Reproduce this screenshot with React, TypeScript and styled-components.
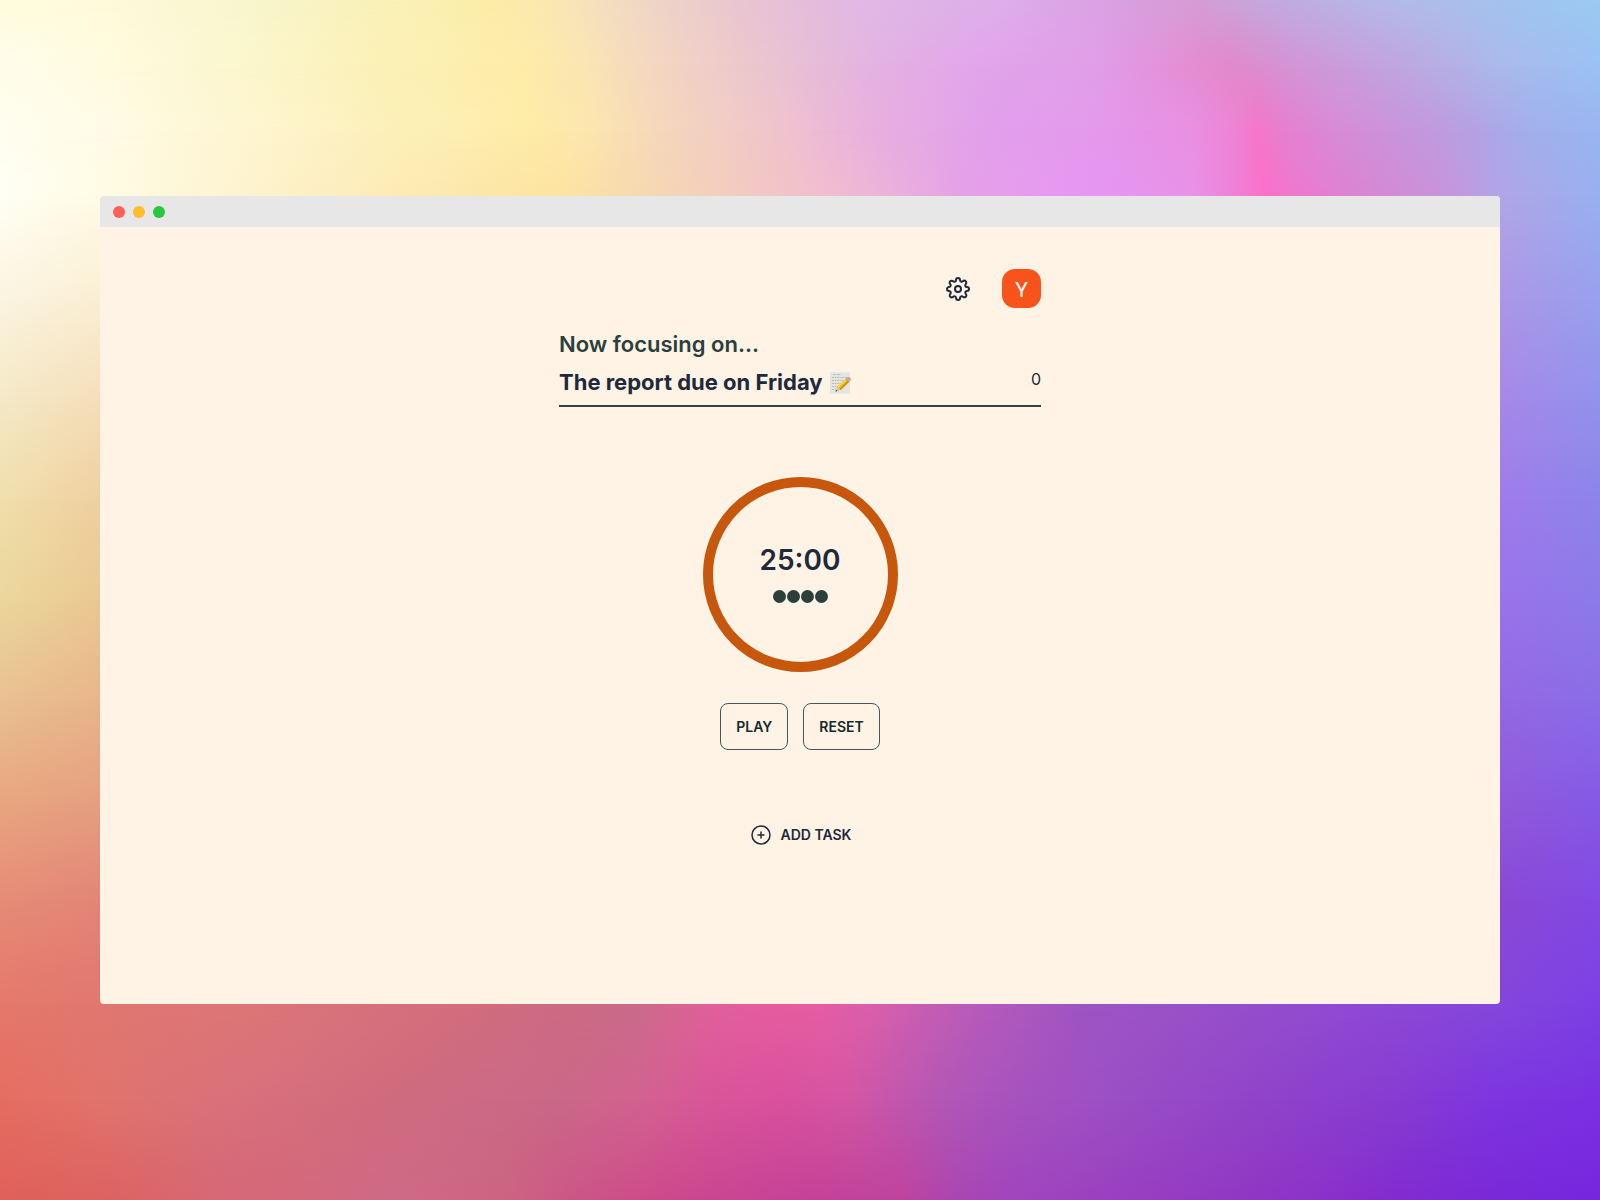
import React, { useEffect, useState } from "react";
import styled, { createGlobalStyle } from "styled-components";
import { FiSettings } from "react-icons/fi";

const GlobalStyle = createGlobalStyle`
  * { box-sizing: border-box; }
  body {
    margin: 0;
    font-family: Inter, "Liberation Sans", sans-serif;
    color: #1e293b;
  }
  h1, h2, p { margin: 0; }
  button { font: inherit; color: inherit; cursor: pointer; }
`;

/* The wallpaper is a colour mesh: every row is a horizontal gradient that
   fades in over the row above it. Stops are [colour, x], rows sit at y,
   both on a 1600 by 1200 grid that is stretched over the page. */
type Stop = [string, number];
type MeshRow = { y: number; stops: Stop[] };

const side = (y: number, a: string, b: string, c: string, d: string): MeshRow => ({
  y,
  stops: [[a, 0], [b, 100], [c, 1500], [d, 1600]],
});

const mesh: MeshRow[] = [
  { y: 0, stops: [["#fffbdc", 0], ["#fffadb", 100], ["#f9f6cf", 235], ["#faf1b6", 400], ["#fbeda8", 490], ["#fae9b1", 545], ["#f4dfbf", 600], ["#eed4c8", 660], ["#e8c4d2", 750], ["#e0b8e6", 870], ["#dfaeea", 1000], ["#d9a2e2", 1100], ["#d59cd5", 1200], ["#c4a8dd", 1260], ["#b3bbe9", 1400], ["#a0c5f0", 1530], ["#9bcaf3", 1600]] },
  { y: 65, stops: [["#fffdea", 0], ["#fffbe0", 100], ["#fbf6cc", 250], ["#fbf0b4", 400], ["#feeca9", 520], ["#fbe6b2", 580], ["#f5d9bf", 640], ["#ebc5cf", 760], ["#e4b3e0", 870], ["#e1a5eb", 980], ["#e19de8", 1100], ["#e48fd5", 1180], ["#e288cb", 1230], ["#d394d4", 1290], ["#bfa6e0", 1400], ["#aab9eb", 1500], ["#9ac2f3", 1600]] },
  { y: 130, stops: [["#fffef0", 0], ["#fffbe6", 100], ["#fef5d0", 250], ["#fcf0b8", 400], ["#feeca8", 530], ["#fce6ae", 590], ["#f5d8bb", 655], ["#f0c3cd", 780], ["#e8b0df", 870], ["#e29eec", 1000], ["#e399ec", 1100], ["#e98fe2", 1195], ["#ee82d2", 1238], ["#f576ca", 1257], ["#e67fce", 1285], ["#d98ad6", 1330], ["#bc9ce0", 1450], ["#a2afec", 1530], ["#99b5f1", 1600]] },
  { y: 195, stops: [["#fffff5", 0], ["#fffbe4", 100], ["#fdf2ce", 250], ["#fdeab4", 400], ["#fce3a0", 560], ["#f8dbae", 620], ["#f3cac0", 740], ["#f0bbd1", 840], ["#e5a1e8", 960], ["#e596f2", 1090], ["#e892e8", 1190], ["#ee80d8", 1235], ["#fd6fc8", 1264], ["#ee77ce", 1292], ["#d985d4", 1360], ["#c893da", 1440], ["#b1a5e7", 1500], ["#98b0f0", 1600]] },
  side(300, "#fbf4e0", "#faeed3", "#ac96e6", "#98a0ee"),
  side(400, "#f4e9c6", "#f5deb9", "#a688e8", "#9292ec"),
  side(500, "#f0dfac", "#efd0a0", "#9f7bea", "#8c84ea"),
  side(600, "#ead79b", "#ebc891", "#9973ea", "#8c7ae8"),
  side(700, "#e9c092", "#e8b58a", "#9468e4", "#8a6de8"),
  side(800, "#e8a680", "#e5a080", "#905ada", "#8559e6"),
  side(900, "#e68c76", "#e38577", "#8b48d4", "#8249e4"),
  { y: 1005, stops: [["#e5786a", 0], ["#e17770", 100], ["#dc7678", 250], ["#d5707c", 400], ["#cd6a81", 560], ["#ca6a8a", 635], ["#d7668f", 675], ["#e0609a", 710], ["#e55da0", 750], ["#e65da3", 820], ["#d75fac", 880], ["#bb5cb8", 960], ["#9f54c3", 1080], ["#964ecb", 1250], ["#8f49d3", 1350], ["#8446dc", 1500], ["#7c3fe4", 1600]] },
  { y: 1100, stops: [["#e56d60", 0], ["#e1736c", 100], ["#d9717a", 220], ["#cf6b7f", 400], ["#ca6888", 560], ["#d2628f", 640], ["#d9559a", 710], ["#da509c", 780], ["#d356a3", 850], ["#b357b5", 940], ["#a953bd", 1000], ["#9c50c4", 1100], ["#9144c9", 1250], ["#873bd2", 1400], ["#7c35e0", 1500], ["#7a30e2", 1600]] },
  { y: 1200, stops: [["#e0605a", 0], ["#dc625f", 100], ["#d76773", 200], ["#cf6a85", 380], ["#cb6582", 500], ["#cc5586", 580], ["#cc4a8b", 660], ["#c44298", 800], ["#bf439c", 900], ["#a946b3", 960], ["#a045bd", 1020], ["#933ac2", 1200], ["#8d33c6", 1300], ["#812bd0", 1400], ["#7a28d8", 1500], ["#7627de", 1600]] },
];

const Page = styled.div`
  position: relative;
  isolation: isolate;
  min-height: 100vh;
  display: grid;
  align-items: center;
  padding: 24px 100px;
`;

const MeshLayer = styled.div<{ $stops: Stop[]; $from: number; $to: number }>`
  position: absolute;
  inset: 0;
  z-index: -1;
  background: linear-gradient(
    to right,
    ${({ $stops }) => $stops.map(([c, x]) => `${c} ${x / 16}%`).join(", ")}
  );
  mask-image: ${({ $from, $to }) =>
    $to === 0
      ? "none"
      : `linear-gradient(to bottom, transparent ${$from / 12}%, #000 ${$to / 12}%)`};
`;

const Window = styled.div`
  border-radius: 4px;
  overflow: hidden;
  background: #fff3e5;
`;

const TitleBar = styled.div`
  display: flex;
  align-items: center;
  gap: 8px;
  height: 31px;
  padding: 0 13px;
  background: #e7e7e7;
`;

const Light = styled.span<{ $color: string }>`
  width: 12px;
  height: 12px;
  border-radius: 50%;
  background: ${({ $color }) => $color};
`;

const Main = styled.main`
  display: flex;
  flex-direction: column;
  align-items: center;
  width: 100%;
  max-width: 482px;
  margin: 0 auto;
  padding: 42px 0 157px;
`;

const Toolbar = styled.header`
  align-self: stretch;
  display: flex;
  justify-content: flex-end;
  align-items: center;
  gap: 32px;
`;

const IconButton = styled.button`
  display: grid;
  padding: 0;
  border: 0;
  background: none;
`;

const Avatar = styled.button`
  width: 39px;
  height: 39px;
  padding: 2px 0 0;
  border: 0;
  border-radius: 13px;
  background: #f9531c;
  && {
    color: #fff;
    font-family: Roboto, sans-serif;
    font-size: 21px;
    line-height: 36px;
  }
`;

const Focus = styled.section`
  align-self: stretch;
  display: grid;
  gap: 6px;
  margin-top: 20px;
`;

const FocusLabel = styled.h2`
  font-size: 22px;
  font-weight: 600;
  line-height: 32px;
  color: #2b3f3d;
`;

const TaskRow = styled.div`
  display: flex;
  justify-content: space-between;
  padding-bottom: 7px;
  border-bottom: 2px solid #2f4543;
`;

const TaskName = styled.h1`
  display: flex;
  align-items: center;
  gap: 6px;
  font-size: 22px;
  font-weight: 700;
  line-height: 32px;
`;

const TaskCount = styled.p`
  font-size: 16px;
  line-height: 26px;
`;

const Ring = styled.section`
  display: flex;
  flex-direction: column;
  align-items: center;
  justify-content: center;
  gap: 12px;
  width: 195px;
  height: 195px;
  margin-top: 70px;
  padding-bottom: 4px;
  border: 10px solid #c7570c;
  border-radius: 50%;
`;

const Time = styled.p`
  font-size: 28px;
  font-weight: 600;
  line-height: 36px;
`;

const Rounds = styled.div`
  display: flex;
  gap: 1px;
`;

const Round = styled.span`
  width: 13px;
  height: 13px;
  border-radius: 50%;
  background: #2b3f3d;
`;

const Controls = styled.div`
  display: flex;
  gap: 15px;
  margin-top: 31px;
`;

const ControlButton = styled.button`
  height: 47px;
  padding: 0 15px;
  border: 1px solid #4b5361;
  border-radius: 8px;
  background: none;
  && {
    font-size: 14px;
    font-weight: 600;
    color: #152a2c;
  }
`;

const AddButton = styled.button`
  display: flex;
  align-items: center;
  gap: 8px;
  margin-top: 73px;
  padding: 0;
  border: 0;
  background: none;
  && {
    font-size: 14px;
    font-weight: 600;
    line-height: 24px;
  }
`;

const PlusCircleIcon = () => (
  <svg width="24" height="24" viewBox="0 0 24 24" fill="none" stroke="#1e293b" strokeWidth="1.5" strokeLinecap="round" strokeLinejoin="round" aria-hidden="true">
    <path d="M12 9v6m3-3H9m12 0a9 9 0 11-18 0 9 9 0 0118 0z" />
  </svg>
);

const MemoIcon = () => (
  <svg width="24" height="24" viewBox="0 0 24 24" role="img" aria-label="Memo">
    <rect x="1" y="1" width="20" height="22.500" rx="0.500" fill="#e4e4e2" />
    <rect x="1" y="1" width="20" height="1.500" fill="#f1f1ef" />
    <g stroke="#b2b2b2" strokeWidth="0.800" fill="none" strokeDasharray="2.200 0.700 1.300 0.500">
      <path d="M4 4.500h8M3 7.500h15M3 10.500h13M3 13.500h9M3 16.500h7M3 19.500h4" />
    </g>
    <path d="M6.500 21.800l1.700-5 3.500 3.200z" fill="#e9c38c" />
    <path d="M6.500 21.800l.7-2 1.300 1.200z" fill="#3c3c3c" />
    <path d="M8.200 16.800L17 8.200l3.500 3.200-8.800 8.600z" fill="#f0b51b" />
    <path d="M8.200 16.800L17 8.200l1.200 1.100-8.800 8.600z" fill="#fbd84b" />
    <path d="M10.600 19l8.800-8.600 1.100 1-8.800 8.600z" fill="#c98a10" />
    <path d="M16.300 8.900l1.300-1.200 3.500 3.200-1.300 1.200z" fill="#a7adb0" />
    <path d="M17.600 7.700c1-1 2.200-1 3.300 0 1.100 1 1.200 2.200.2 3.200z" fill="#f08a8d" />
  </svg>
);

const LIGHTS = ["#ff5f57", "#febc2e", "#28c840"];
const SESSION = 25 * 60;

export default function App() {
  const [left, setLeft] = useState(SESSION);
  const [running, setRunning] = useState(false);

  useEffect(() => {
    if (!running) return;
    const id = setInterval(() => setLeft((s) => Math.max(0, s - 1)), 1000);
    return () => clearInterval(id);
  }, [running]);

  const reset = () => {
    setRunning(false);
    setLeft(SESSION);
  };

  const pad = (n: number) => String(n).padStart(2, "0");

  return (
    <Page>
      <GlobalStyle />
      {mesh.map((row, i) => (
        <MeshLayer key={row.y} $stops={row.stops} $from={i ? mesh[i - 1].y : 0} $to={row.y} />
      ))}
      <Window>
        <TitleBar>
          {LIGHTS.map((color) => (
            <Light key={color} $color={color} />
          ))}
        </TitleBar>
        <Main>
          <Toolbar>
            <IconButton type="button" aria-label="Settings">
              <FiSettings size={24} color="#1e293b" />
            </IconButton>
            <Avatar type="button">Y</Avatar>
          </Toolbar>
          <Focus>
            <FocusLabel>Now focusing on...</FocusLabel>
            <TaskRow>
              <TaskName>
                The report due on Friday
                <MemoIcon />
              </TaskName>
              <TaskCount>0</TaskCount>
            </TaskRow>
          </Focus>
          <Ring>
            <Time>
              {`${pad(Math.floor(left / 60))}:${pad(left % 60)}`}
            </Time>
            <Rounds>
              {[1, 2, 3, 4].map((n) => (
                <Round key={n} />
              ))}
            </Rounds>
          </Ring>
          <Controls>
            <ControlButton type="button" onClick={() => setRunning(!running)}>
              {running ? "PAUSE" : "PLAY"}
            </ControlButton>
            <ControlButton type="button" onClick={reset}>
              RESET
            </ControlButton>
          </Controls>
          <AddButton type="button">
            <PlusCircleIcon />
            ADD TASK
          </AddButton>
        </Main>
      </Window>
    </Page>
  );
}
